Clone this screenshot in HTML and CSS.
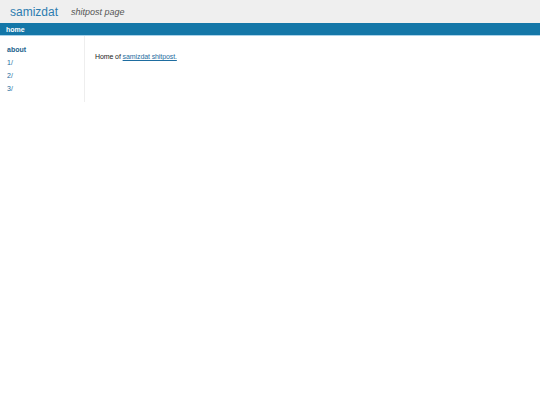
FILE: index.html
```html
<!DOCTYPE html>
<html>
<head>
<meta charset="utf-8">
<link rel="stylesheet" href="styles.css">
</head>
<body>
<header class="top">
  <a class="brand" href="#">samizdat</a>
  <span class="tagline">shitpost page</span>
</header>
<nav class="bar"><a href="#">home</a></nav>
<div class="main">
  <aside class="side">
    <a class="cur" href="#">about</a>
    <a href="#">1/</a>
    <a href="#">2/</a>
    <a href="#">3/</a>
  </aside>
  <section class="content">
    <p>Home of <a href="#">samizdat shitpost.</a></p>
  </section>
</div>
</body>
</html>
```
FILE: styles.css
```css
html, body { margin: 0; padding: 0; background: #fff; }
body { font-family: "Liberation Sans", Arial, sans-serif; font-size: 7px; color: #222; }
.top { background: #efefef; height: 23px; display: flex; align-items: center; padding-left: 10px; }
.brand { color: #2b7cb0; font-size: 12px; text-decoration: none; }
.tagline { color: #555; font-style: italic; font-size: 9px; margin-left: 13px; }
.bar { background: #1477a8; height: 12px; border-bottom: 1px solid #a9d2ea; display: flex; align-items: center; padding-left: 6px; }
.bar a { color: #fff; font-weight: bold; text-decoration: none; font-size: 7px; }
.main { display: flex; }
.side { width: 77px; border-right: 1px solid #eee; padding: 10px 0 7px 7px; display: flex; flex-direction: column; gap: 5px; min-height: 49px; }
.side a { color: #1e6da0; text-decoration: none; line-height: 8px; }
.side a.cur { font-weight: bold; color: #1a5f8c; }
.content { padding: 17px 10px; }
.content p { margin: 0; letter-spacing: -0.1px; }
.content a { color: #1e6da0; }
```
